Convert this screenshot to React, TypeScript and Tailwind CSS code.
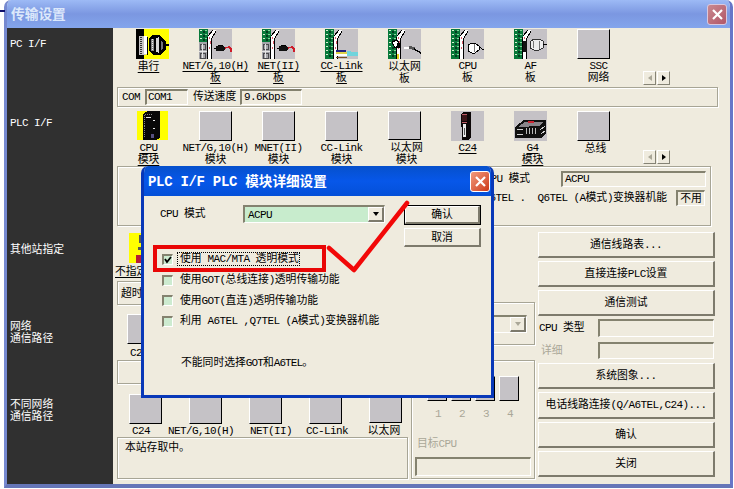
import { Fragment, type ReactNode } from "react";

const latinFont = "font-['Liberation_Mono','Noto_Sans_CJK_SC',monospace]";
const cjkFont = "font-['Noto_Sans_CJK_SC',sans-serif]";

/* Mixed text: half-width Latin glyphs next to full-width Chinese ones. */
function T({ children, className = "", latin = "text-[11px] tracking-[-0.6px]", cjk = "text-[10.8px]" }: { children: string; className?: string; latin?: string; cjk?: string }) {
  const runs = children.split(/([\u3000-\u9fff]+)/).filter(Boolean);
  return (
    <span className={`block text-[10px] leading-[11px] whitespace-pre ${latinFont} ${className}`}>
      {runs.map((run, i) => (
        <span key={i} className={/[\u3000-\u9fff]/.test(run) ? `${cjkFont} leading-[9px] ${cjk}` : `${latinFont} leading-[9px] ${latin}`}>
          {run}
        </span>
      ))}
    </span>
  );
}

const frame = "border border-[#a7a595] shadow-[1px_1px_0_#fff,inset_1px_1px_0_#fff]";
const sunken = "border-t-2 border-l-2 border-r border-b border-t-[#84826f] border-l-[#84826f] border-r-white border-b-white";
const raised = "border-t border-l border-r-2 border-b-2 border-t-white border-l-white border-r-[#7d7a6c] border-b-[#7d7a6c] bg-[#efebde]";

function Blank() {
  return <div className="h-[30px] w-[33px] border-t border-l border-r border-b border-t-white border-l-white border-r-black border-b-black bg-[#c5c2c6]" />;
}

function Pic({ children, bg = "#c5c2c6" }: { children: ReactNode; bg?: string }) {
  return (
    <svg width="33" height="30" viewBox="0 0 33 30" shapeRendering="crispEdges" className="block">
      <rect width="33" height="30" fill={bg} />
      {children}
    </svg>
  );
}

/* Green circuit board with its metal bracket, shared by the interface cards. */
function Board({ slots = false }: { slots?: boolean }) {
  return (
    <>
      <rect width="9" height="30" fill="#08793a" />
      {[1, 5, 9, 13, 17, 21, 25].map((y) => (
        <Fragment key={y}>
          <rect x="1" y={y} width="2" height="1" fill="#d6f0d0" />
          <rect x="4" y={y + 1} width="2" height="2" fill="#043c20" />
          <rect x="6" y={y} width="2" height="1" fill="#84d49a" />
        </Fragment>
      ))}
      {slots && (
        <>
          <rect y="13" width="8" height="17" fill="#a5a5aa" />
          <path d="M1 15h5v5h-5zM1 24h5v5h-5z" fill="none" stroke="#4a4a4e" />
          <path d="M3 15v14M0 22h8" stroke="#e5e5e5" />
        </>
      )}
      <rect x="8" y="8" width="1" height="22" fill="#000" />
      <rect x="9" y="6" width="3" height="24" fill="#fff" />
      <path d="M10 8v2M11 12v3M10 18v2" stroke="#db5968" />
      <rect x="12" y="8" width="1" height="22" fill="#000" />
      <path d="M9 8l5-7h3l-4 8z" fill="#fff" />
      <path d="M9 7l5-6M13 9l4-7" stroke="#000" />
    </>
  );
}

const serialPic = (
  <Pic bg="#ffff00">
    <path d="M0 0h8v30H0z" fill="#000" />
    <path d="M3 7h7v19H3z" fill="#c5c2c6" />
    <path d="M5 8v17" stroke="#333" strokeWidth="2" strokeDasharray="1 1" />
    <path d="M8 7h3v18H8z" fill="#fff" />
    <path d="M11 8v18" stroke="#000" />
    <path d="M13 9l4-3h7l6 7v7l-6 6h-7l-4-4z" fill="#000" />
    <path d="M15 10h3v12h-3z" fill="#858585" />
    <path d="M16 10v12" stroke="#eee" strokeDasharray="1 1" />
    <path d="M20 9l3-1v16l-3-1z" fill="#d6d6d6" />
    <path d="M25 11l2 3v5l-2 3z" fill="#73737b" />
    <path d="M29 16h4" stroke="#000" strokeWidth="2" />
  </Pic>
);
const netPic = (
  <Pic>
    <Board slots />
    <path d="M15 19h3M19 16h5M19 21h5" stroke="#000" />
    <path d="M17 17h7l3 2-3 3h-7z" fill="#111" />
    <path d="M26 19l4-1 2 2v3" fill="none" stroke="#cf1b28" strokeWidth="1.5" />
  </Pic>
);
const ccPic = (
  <Pic>
    <Board />
    <path d="M11 22h10" stroke="#232380" strokeWidth="2" />
    <path d="M11 24h11" stroke="#e1d44a" strokeWidth="2" />
    <path d="M11 26h12" stroke="#fff" strokeWidth="2" />
    <path d="M11 28h11" stroke="#79501f" />
    <path d="M22 22h4v1h7v4H22z" fill="#70d4dc" />
  </Pic>
);
const etherPic = (
  <Pic>
    <Board />
    <path d="M4 13l5-2 3 4-5 4z" fill="#fff" stroke="#000" />
    <path d="M9 14h3v5H9z" fill="#000" />
    <path d="M9 25h2v5H9z" fill="#e2d31c" />
    <path d="M16 18h5v2h-5z" fill="#fff" />
    <path d="M21 17l6 1v3l-6-1z" fill="#555" />
    <path d="M26 20l7 4" stroke="#000" strokeWidth="1.5" />
  </Pic>
);
const cpuBoardPic = (
  <Pic>
    <Board />
    <path d="M17 16l4-2h3l4 3v4l-4 3h-3l-4-2z" fill="#fff" stroke="#000" />
    <path d="M23 15v8" stroke="#777" />
    <path d="M28 18l5 3" stroke="#000" />
  </Pic>
);
const afPic = (
  <Pic>
    <Board />
    <path d="M9 12h4v11H9z" fill="#111" />
    <path d="M16 13l4-3h5l4 2v7l-4 2h-5l-4-2z" fill="#eee" stroke="#333" />
    <path d="M19 12v7M25 12v8" stroke="#777" />
    <path d="M29 15h4" stroke="#000" />
  </Pic>
);
const cpuPic = (
  <Pic bg="#ffff00">
    <path d="M7 3l4-3h13v28l-4 2H7z" fill="#080808" />
    <path d="M8 4v24M9 4h8" fill="none" stroke="#888" strokeDasharray="1 1" />
    <path d="M10 7h5M17 10h2M17 18h2" stroke="#eee" />
    <path d="M15 24h3v4h-3z" fill="#565080" />
  </Pic>
);
const c24Pic = (
  <Pic>
    <path d="M10 3l3-2h7v26l-3 2h-6z" fill="#0c0708" />
    <path d="M11 4h5v6h-5z" fill="#3c1519" />
    <path d="M11 3h5M11 11h5" stroke="#bd5964" />
    <path d="M12 13h3v13h-3z" fill="#e9e9e9" />
    <path d="M13 17v7" stroke="#555" />
  </Pic>
);
const g4Pic = (
  <Pic>
    <path d="M1 16l9-7h22v14l-5 4H1z" fill="#101010" />
    <path d="M4 16l7-5h19l-5 4z" fill="#88858a" />
    <path d="M14 11h6" stroke="#cc2533" strokeWidth="2" />
    <path d="M3 18h6M3 23h6M26 19l5-4M27 23l4-3" stroke="#d3d3d3" />
    <path d="M12 17v6M15 17v6M18 17v6M21 17v6" stroke="#bbb" />
  </Pic>
);

type Item = { pic?: ReactNode; a: string; b?: string; under?: boolean; shift?: string };

const pcItems: Item[] = [
  { pic: serialPic, a: "串行", under: true, shift: "-ml-2" },
  { pic: netPic, a: "NET/G,10(H)", b: "板", under: true },
  { pic: netPic, a: "NET(II)", b: "板", under: true },
  { pic: ccPic, a: "CC-Link", b: "板", under: true },
  { pic: etherPic, a: "以太网", b: "板" },
  { pic: cpuBoardPic, a: "CPU", b: "板" },
  { pic: afPic, a: "AF", b: "板" },
  { a: "SSC", b: "网络", shift: "ml-2.5" },
];
const plcItems: Item[] = [
  { pic: cpuPic, a: "CPU", b: "模块", under: true, shift: "-ml-2 pt-px" },
  { a: "NET/G,10(H)", b: "模块" },
  { a: "MNET(II)", b: "模块" },
  { a: "CC-Link", b: "模块" },
  { a: "以太网", b: "模块", shift: "ml-1" },
  { pic: c24Pic, a: "C24", under: true },
  { pic: g4Pic, a: "G4", b: "模块", under: true, shift: "ml-1" },
  { a: "总线", shift: "ml-1" },
];
const netItems: Item[] = [
  { a: "C24", shift: "-ml-2" },
  { a: "NET/G,10(H)", shift: "-ml-2" },
  { a: "NET(II)", shift: "ml-3" },
  { a: "CC-Link", shift: "ml-1" },
  { a: "以太网", shift: "-ml-0.5" },
];

function Cell({ item, width }: { item: Item; width: string }) {
  const line = item.under ? "underline decoration-1 underline-offset-[1.5px] [text-decoration-skip-ink:none]" : "";
  return (
    <div className={`flex shrink-0 flex-col items-center ${width}`}>
      {item.pic ?? <Blank />}
      <div className={`mt-[2px] flex flex-col items-center ${item.shift ?? ""}`}>
        <T className={line}>{item.a}</T>
        {item.b && <T className={line}>{item.b}</T>}
      </div>
    </div>
  );
}

function Scroller() {
  return (
    <div className="mb-[2px] ml-[18px] flex gap-px self-end">
      {[false, true].map((on) => (
        <div key={String(on)} className="flex h-[14px] w-[13px] items-center justify-center border-t border-l border-r border-b border-t-white border-l-white border-r-[#858375] border-b-[#858375]">
          <svg width="4" height="6" viewBox="0 0 4 6">
            <path d={on ? "M0 0l4 3-4 3z" : "M4 0L0 3l4 3z"} fill={on ? "#000" : "#aaa798"} />
          </svg>
        </div>
      ))}
    </div>
  );
}

function WideButton({ children, h }: { children: string; h: string }) {
  return (
    <button className={`flex w-[177px] shrink-0 items-center justify-center ${h} ${raised}`}>
      <T>{children}</T>
    </button>
  );
}

function CloseX({ className }: { className: string }) {
  return (
    <button className={`flex h-[21px] w-[20px] items-center justify-center rounded-[3px] border ${className}`}>
      <svg width="13" height="13" viewBox="0 0 13 13">
        <path d="M2 2l9 9M11 2l-9 9" stroke="#fff" strokeWidth="2.2" />
      </svg>
    </button>
  );
}

function Check({ on, children }: { on?: boolean; children: string }) {
  return (
    <div className="flex h-[20.7px] items-center">
      <span className={`flex h-[11px] w-[11px] items-center justify-center bg-[#cdebd0] ${sunken}`}>
        {on && (
          <svg width="8" height="8" viewBox="0 0 8 8">
            <path d="M1 3l2 3 4-5" fill="none" stroke="#000" strokeWidth="1.8" />
          </svg>
        )}
      </span>
      <T className={`ml-[5px] pl-[2px] ${on ? "outline-1 outline-dotted outline-black" : ""}`}>{children}</T>
    </div>
  );
}

function Dialog() {
  return (
    <div className="absolute top-[166px] left-[141px] flex h-[232px] w-[353px] flex-col overflow-hidden rounded-t-[7px] border-r-[3px] border-b-[3px] border-l-[3px] border-[#0838b8] bg-[#efebde]">
      <div className="-mx-[3px] flex h-[30px] shrink-0 items-center justify-between bg-linear-to-b from-[#0650cc] via-[#0757e9] to-[#0450d8] pr-[4px] pl-[7px]">
        <T latin="text-[14px] tracking-[-0.3px]" cjk="text-[13.6px]" className="pt-[2px] font-bold text-white">PLC I/F PLC 模块详细设置</T>
        <CloseX className="border-white bg-linear-to-br from-[#f09a7c] to-[#cc3510]" />
      </div>
      <div className="flex pt-[9px] pl-[16px]">
        <T className="mt-[3px] w-[83px]">CPU 模式</T>
        <div className={`flex h-[18px] w-[142px] items-center justify-between bg-[#c8eccd] pl-[3px] ${sunken}`}>
          <T className="pt-[2px]">ACPU</T>
          <div className={`flex h-[15px] w-[16px] items-center justify-center ${raised}`}>
            <svg width="6" height="4" viewBox="0 0 6 4"><path d="M0 0h6L3 4z" /></svg>
          </div>
        </div>
        <div className="ml-[19px] flex flex-col gap-[3px]">
          <button className="h-[20px] w-[77px] border border-black">
            <span className={`flex h-full items-center justify-center ${raised}`}><T>确认</T></span>
          </button>
          <button className={`flex h-[19px] w-[77px] items-center justify-center pt-px ${raised}`}><T>取消</T></button>
        </div>
      </div>
      <div className="mt-[2px] flex flex-col pl-[18px]">
        <Check on>使用 MAC/MTA 透明模式</Check>
        <Check>使用GOT(总线连接)透明传输功能</Check>
        <Check>使用GOT(直连)透明传输功能</Check>
        <Check>利用 A6TEL ,Q7TEL (A模式)变换器机能</Check>
      </div>
      <T latin="text-[11px] tracking-[-0.9px]" className="mt-[25px] ml-[37px]">不能同时选择GOT和A6TEL。</T>
    </div>
  );
}

function Sidebar() {
  return (
    <div className="flex w-[106px] shrink-0 flex-col bg-[#303030] pt-[11px] pl-[3px] text-white">
      <T className="h-[79px]">PC I/F</T>
      <T className="h-[126px]">PLC I/F</T>
      <T className="h-[77px]">其他站指定</T>
      <T className="h-[78px]">{"网络\n通信路径"}</T>
      <T>{"不同网络\n通信路径"}</T>
    </div>
  );
}

function StationArea() {
  return (
    <div className="flex w-[425px] shrink-0 flex-col">
      <div className="flex h-[54px] flex-col pt-[7px] pl-[2px]">
        <div className="pl-[14px]">
          <Pic bg="#ffff00">
            <path d="M10 2h12v8H10zM9 14h15v3H9z" fill="#555" />
            <path d="M7 22h19v8H7z" fill="#b51d35" />
          </Pic>
        </div>
        <T className="mt-[3px] self-start underline underline-offset-[1.5px]">不指定</T>
      </div>
      <div className={`mt-[1px] ml-[4px] h-[24px] w-[280px] py-[6px] pl-[3px] ${frame}`}><T>超时</T></div>
      <div className="flex h-[55px] justify-between">
        <div className="flex w-[60px] flex-col items-center pt-[9px]">
          <Blank />
          <T className="mt-[4px] -ml-2">C24</T>
        </div>
        <div className={`mt-[-3px] mr-[3px] flex h-[43px] w-[124px] items-start justify-end pt-[12px] pr-[7px] ${frame}`}>
          <div className={`flex h-[18px] w-[110px] justify-end ${sunken}`}>
            <div className={`flex h-[15px] w-[16px] items-center justify-center ${raised}`}>
              <svg width="6" height="4" viewBox="0 0 6 4"><path d="M0 0h6L3 4z" fill="#aaa798" /></svg>
            </div>
          </div>
        </div>
      </div>
      <div className="flex gap-[3px] pl-[4px]">
        <div className="flex w-[291px] flex-col">
          <div className={`h-[24px] ${frame}`} />
          <div className="-ml-[4px] flex h-[53px] pt-[10px] pl-[2px]">
            {netItems.map((item) => <Cell key={item.a} item={item} width="w-[60px]" />)}
          </div>
          <div className={`h-[42px] px-[7px] py-[4px] ${frame}`}><T>本站存取中。</T></div>
        </div>
        <div className={`flex h-[119px] w-[124px] flex-col px-[3px] text-[#aaa798] ${frame}`}>
          <div className="flex gap-[4px] pt-[15px] pl-[12px]">
            {["1", "2", "3", "4"].map((n) => (
              <div key={n} className="flex w-[20px] flex-col items-center">
                <div className="h-[25px] w-full border border-t-white border-r-black border-b-black border-l-white bg-[#c5c2c6]" />
                <T className="mt-[8px] ml-[2px]">{n}</T>
              </div>
            ))}
          </div>
          <T className="mt-[18px] pl-[2px]">目标CPU</T>
          <div className={`mt-[7px] h-[19px] ${sunken}`} />
        </div>
      </div>
    </div>
  );
}

export default function App() {
  return (
    <div className="relative h-[489px] w-[734px] overflow-hidden bg-white text-black">
      <div className="absolute top-[10px] left-0 h-[2px] w-[5px] bg-[#10106b]" />
      <div className="ml-[4px] flex h-[488px] w-[729px] flex-col overflow-hidden rounded-t-[7px] border-r-[3px] border-b-[4px] border-l-[3px] border-r-[#6676c8] border-b-[#6676b8] border-l-[#7689d0] bg-[#efebde]">
        <div className="-mx-[3px] flex h-[28px] shrink-0 items-center justify-between bg-linear-to-b from-[#9dbaf5] via-[#7b97e1] to-[#84a5ec] pr-[6px] pl-[7px]">
          <T cjk="text-[13.7px]" className="pt-[2px] font-bold text-[#dce8fb]">传输设置</T>
          <CloseX className="border-[#d9c8de] bg-linear-to-br from-[#c98990] to-[#b15668]" />
        </div>
        <div className="flex min-h-0 flex-1">
          <Sidebar />
          <div className="flex w-[617px] shrink-0 flex-col">
            <div className="flex h-[59px] pt-[1px] pl-[8px]">
              {pcItems.map((item) => <Cell key={item.a} item={item} width="w-[63px]" />)}
              <Scroller />
            </div>
            <div className={`ml-[4px] flex h-[20px] w-[601px] shrink-0 items-center pl-[4px] ${frame}`}>
              <T className="w-[23px]">COM</T>
              <div className={`flex h-[16px] w-[43px] items-center pl-px ${sunken}`}><T>COM1</T></div>
              <T className="ml-[5px] w-[47px]">传送速度</T>
              <div className={`flex h-[16px] w-[62px] items-center pl-[2px] ${sunken}`}><T>9.6Kbps</T></div>
            </div>
            <div className="flex h-[59px] pt-[4px] pl-[8px]">
              {plcItems.map((item) => <Cell key={item.a} item={item} width="w-[63px]" />)}
              <Scroller />
            </div>
            <div className={`ml-[4px] flex h-[60px] w-[594px] shrink-0 flex-col items-end pt-[4px] pr-[4px] ${frame}`}>
              <div className="flex items-center">
                <T className="mr-[31px]">CPU 模式</T>
                <div className={`flex h-[16px] w-[145px] items-center pl-[2px] ${sunken}`}><T>ACPU</T></div>
              </div>
              <div className="mt-[3px] mr-[1px] flex items-center gap-[9px]">
                <T>A6TEL .  Q6TEL (A模式)变换器机能</T>
                <div className={`flex h-[16px] w-[29px] items-center justify-center ${sunken}`}><T>不用</T></div>
              </div>
            </div>
            <div className="flex">
              <StationArea />
              <div className="flex flex-col pt-[6px]">
                <div className="flex flex-col gap-[3px]">
                  <WideButton h="h-[26px]">通信线路表...</WideButton>
                  <WideButton h="h-[26px]">直接连接PLC设置</WideButton>
                  <WideButton h="h-[26px]">通信测试</WideButton>
                </div>
                <div className="mt-[3px] flex h-[18px] items-center">
                  <T className="w-[60px] pl-px">CPU 类型</T>
                  <div className={`h-[18px] w-[116px] ${sunken}`} />
                </div>
                <div className="mt-[5px] mb-[4px] flex h-[17px] items-center">
                  <T className="w-[60px] pl-[3px] text-[#aaa798]">详细</T>
                  <div className={`h-[17px] w-[116px] ${sunken}`} />
                </div>
                <div className="flex flex-col gap-[3px]">
                  <WideButton h="h-[26px]">系统图象...</WideButton>
                  <WideButton h="h-[27px]">电话线路连接(Q/A6TEL,C24)...</WideButton>
                  <WideButton h="h-[26px]">确认</WideButton>
                  <WideButton h="h-[26px]">关闭</WideButton>
                </div>
              </div>
            </div>
          </div>
        </div>
      </div>
      <Dialog />
      <svg className="pointer-events-none absolute inset-0" width="734" height="489" viewBox="0 0 734 489">
        <rect x="155" y="247" width="169" height="23" fill="none" stroke="#e90606" strokeWidth="4" />
        <path d="M329 248L354 270L407 203" fill="none" stroke="#f20808" strokeWidth="4.5" strokeLinecap="round" strokeLinejoin="round" />
      </svg>
    </div>
  );
}
